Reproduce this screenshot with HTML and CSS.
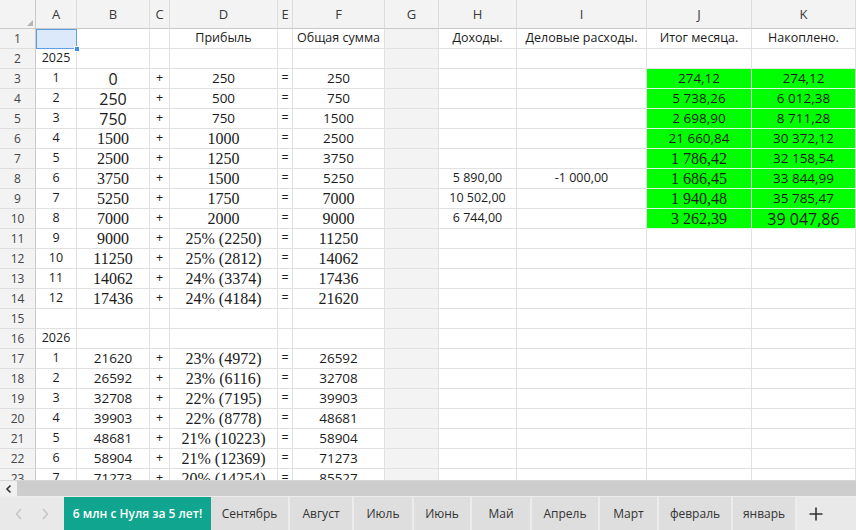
FILE: index.html
```html
<!DOCTYPE html>
<html lang="ru">
<head>
<meta charset="utf-8">
<title>Таблица</title>
<link rel="stylesheet" href="styles.css">
</head>
<body>
<div class="app">
  <div class="sheet">
    <div class="ch corner"><span class="tri"></span></div>
    <div class="ch">A</div><div class="ch">B</div><div class="ch">C</div><div class="ch">D</div><div class="ch">E</div><div class="ch">F</div><div class="ch">G</div><div class="ch">H</div><div class="ch">I</div><div class="ch">J</div><div class="ch">K</div>

    <div class="rh">1</div><div class="c sel"><span class="handle"></span></div><div class="c"></div><div class="c"></div><div class="c t">Прибыль</div><div class="c"></div><div class="c t">Общая сумма</div><div class="c cg"></div><div class="c t">Доходы.</div><div class="c t">Деловые расходы.</div><div class="c t">Итог месяца.</div><div class="c t">Накоплено.</div>

    <div class="rh">2</div><div class="c t">2025</div><div class="c"></div><div class="c"></div><div class="c"></div><div class="c"></div><div class="c"></div><div class="c cg"></div><div class="c"></div><div class="c"></div><div class="c"></div><div class="c"></div>

    <div class="rh">3</div><div class="c t">1</div><div class="c sb">0</div><div class="c t">+</div><div class="c n">250</div><div class="c t">=</div><div class="c n">250</div><div class="c cg"></div><div class="c"></div><div class="c"></div><div class="c g n">274,12</div><div class="c g n">274,12</div>

    <div class="rh">4</div><div class="c t">2</div><div class="c sb">250</div><div class="c t">+</div><div class="c n">500</div><div class="c t">=</div><div class="c n">750</div><div class="c cg"></div><div class="c"></div><div class="c"></div><div class="c g n">5 738,26</div><div class="c g n">6 012,38</div>

    <div class="rh">5</div><div class="c t">3</div><div class="c sb">750</div><div class="c t">+</div><div class="c n">750</div><div class="c t">=</div><div class="c n">1500</div><div class="c cg"></div><div class="c"></div><div class="c"></div><div class="c g n">2 698,90</div><div class="c g n">8 711,28</div>

    <div class="rh">6</div><div class="c t">4</div><div class="c sf">1500</div><div class="c t">+</div><div class="c sf">1000</div><div class="c t">=</div><div class="c n">2500</div><div class="c cg"></div><div class="c"></div><div class="c"></div><div class="c g n">21 660,84</div><div class="c g n">30 372,12</div>

    <div class="rh">7</div><div class="c t">5</div><div class="c sf">2500</div><div class="c t">+</div><div class="c sf">1250</div><div class="c t">=</div><div class="c n">3750</div><div class="c cg"></div><div class="c"></div><div class="c"></div><div class="c g sf">1 786,42</div><div class="c g n">32 158,54</div>

    <div class="rh">8</div><div class="c t">6</div><div class="c sf">3750</div><div class="c t">+</div><div class="c sf">1500</div><div class="c t">=</div><div class="c n">5250</div><div class="c cg"></div><div class="c t">5 890,00</div><div class="c t">-1 000,00</div><div class="c g sf">1 686,45</div><div class="c g n">33 844,99</div>

    <div class="rh">9</div><div class="c t">7</div><div class="c sf">5250</div><div class="c t">+</div><div class="c sf">1750</div><div class="c t">=</div><div class="c sf">7000</div><div class="c cg"></div><div class="c t">10 502,00</div><div class="c"></div><div class="c g sf">1 940,48</div><div class="c g n">35 785,47</div>

    <div class="rh">10</div><div class="c t">8</div><div class="c sf">7000</div><div class="c t">+</div><div class="c sf">2000</div><div class="c t">=</div><div class="c sf">9000</div><div class="c cg"></div><div class="c t">6 744,00</div><div class="c"></div><div class="c g sf">3 262,39</div><div class="c g sb">39 047,86</div>

    <div class="rh">11</div><div class="c t">9</div><div class="c sf">9000</div><div class="c t">+</div><div class="c sf">25% (2250)</div><div class="c t">=</div><div class="c sf">11250</div><div class="c cg"></div><div class="c"></div><div class="c"></div><div class="c"></div><div class="c"></div>

    <div class="rh">12</div><div class="c t">10</div><div class="c sf">11250</div><div class="c t">+</div><div class="c sf">25% (2812)</div><div class="c t">=</div><div class="c sf">14062</div><div class="c cg"></div><div class="c"></div><div class="c"></div><div class="c"></div><div class="c"></div>

    <div class="rh">13</div><div class="c t">11</div><div class="c sf">14062</div><div class="c t">+</div><div class="c sf">24% (3374)</div><div class="c t">=</div><div class="c sf">17436</div><div class="c cg"></div><div class="c"></div><div class="c"></div><div class="c"></div><div class="c"></div>

    <div class="rh">14</div><div class="c t">12</div><div class="c sf">17436</div><div class="c t">+</div><div class="c sf">24% (4184)</div><div class="c t">=</div><div class="c sf">21620</div><div class="c cg"></div><div class="c"></div><div class="c"></div><div class="c"></div><div class="c"></div>

    <div class="rh">15</div><div class="c"></div><div class="c"></div><div class="c"></div><div class="c"></div><div class="c"></div><div class="c"></div><div class="c cg"></div><div class="c"></div><div class="c"></div><div class="c"></div><div class="c"></div>

    <div class="rh">16</div><div class="c t">2026</div><div class="c"></div><div class="c"></div><div class="c"></div><div class="c"></div><div class="c"></div><div class="c cg"></div><div class="c"></div><div class="c"></div><div class="c"></div><div class="c"></div>

    <div class="rh">17</div><div class="c t">1</div><div class="c n">21620</div><div class="c t">+</div><div class="c sf">23% (4972)</div><div class="c t">=</div><div class="c n">26592</div><div class="c cg"></div><div class="c"></div><div class="c"></div><div class="c"></div><div class="c"></div>

    <div class="rh">18</div><div class="c t">2</div><div class="c n">26592</div><div class="c t">+</div><div class="c sf">23% (6116)</div><div class="c t">=</div><div class="c n">32708</div><div class="c cg"></div><div class="c"></div><div class="c"></div><div class="c"></div><div class="c"></div>

    <div class="rh">19</div><div class="c t">3</div><div class="c n">32708</div><div class="c t">+</div><div class="c sf">22% (7195)</div><div class="c t">=</div><div class="c n">39903</div><div class="c cg"></div><div class="c"></div><div class="c"></div><div class="c"></div><div class="c"></div>

    <div class="rh">20</div><div class="c t">4</div><div class="c n">39903</div><div class="c t">+</div><div class="c sf">22% (8778)</div><div class="c t">=</div><div class="c n">48681</div><div class="c cg"></div><div class="c"></div><div class="c"></div><div class="c"></div><div class="c"></div>

    <div class="rh">21</div><div class="c t">5</div><div class="c n">48681</div><div class="c t">+</div><div class="c sf">21% (10223)</div><div class="c t">=</div><div class="c n">58904</div><div class="c cg"></div><div class="c"></div><div class="c"></div><div class="c"></div><div class="c"></div>

    <div class="rh">22</div><div class="c t">6</div><div class="c n">58904</div><div class="c t">+</div><div class="c sf">21% (12369)</div><div class="c t">=</div><div class="c n">71273</div><div class="c cg"></div><div class="c"></div><div class="c"></div><div class="c"></div><div class="c"></div>

    <div class="rh">23</div><div class="c t">7</div><div class="c n">71273</div><div class="c t">+</div><div class="c sf">20% (14254)</div><div class="c t">=</div><div class="c n">85527</div><div class="c cg"></div><div class="c"></div><div class="c"></div><div class="c"></div><div class="c"></div>
  </div>

  <div class="hscroll">
    <div class="sbtn"><svg width="10" height="10" viewBox="0 0 10 10"><path d="M6.5 1.5 L3 5 L6.5 8.5" fill="none" stroke="#333" stroke-width="1.6"/></svg></div>
    <div class="thumb"></div>
  </div>

  <div class="tabs">
    <div class="nav">
      <svg width="10" height="12" viewBox="0 0 10 12"><path d="M7 1 L2.5 6 L7 11" fill="none" stroke="#c4c4c4" stroke-width="1.4"/></svg>
      <svg width="10" height="12" viewBox="0 0 10 12"><path d="M3 1 L7.5 6 L3 11" fill="none" stroke="#c4c4c4" stroke-width="1.4"/></svg>
    </div>
    <div class="tab active">6 млн с Нуля за 5 лет!</div>
    <div class="tab w79">Сентябрь</div>
    <div class="tab w64">Август</div>
    <div class="tab w60">Июль</div>
    <div class="tab w58">Июнь</div>
    <div class="tab w60">Май</div>
    <div class="tab w68">Апрель</div>
    <div class="tab w59">Март</div>
    <div class="tab w74">февраль</div>
    <div class="tab w64">январь</div>
    <div class="add"><svg width="14" height="14" viewBox="0 0 14 14"><path d="M7 0.5 V13.5 M0.5 7 H13.5" stroke="#333" stroke-width="1.6"/></svg></div>
  </div>
</div>
</body>
</html>
```

FILE: styles.css
```css
* { box-sizing: border-box; }
html, body { margin: 0; padding: 0; }
body {
  width: 856px;
  height: 530px;
  overflow: hidden;
  background: #ffffff;
  font-family: "Open Sans", "Noto Sans", sans-serif;
  color: #1b1b1b;
}
.app {
  display: flex;
  flex-direction: column;
  width: 856px;
  height: 530px;
}
.sheet {
  display: grid;
  grid-template-columns: 36px 41px 73px 20px 108px 15px 92px 54px 78px 130px 105px 104px;
  grid-template-rows: 29px;
  grid-auto-rows: 20px;
  height: 480px;
  overflow: hidden;
  flex: none;
}
.ch {
  background: #f3f3f3;
  border-right: 1px solid #dcdcdc;
  border-bottom: 1px solid #c9c9c9;
  display: flex;
  align-items: center;
  justify-content: center;
  font-size: 13px;
  color: #3a3a3a;
}
.corner {
  position: relative;
  border-right: 1px solid #c9c9c9;
}
.tri {
  position: absolute;
  right: 2px;
  bottom: 2px;
  width: 0;
  height: 0;
  border-left: 6px solid transparent;
  border-bottom: 6px solid #b4b4b4;
}
.rh {
  background: #f3f3f3;
  border-right: 1px solid #c9c9c9;
  border-bottom: 1px solid #dedede;
  display: flex;
  align-items: center;
  justify-content: center;
  font-size: 12px;
  color: #444;
}
.c {
  border-right: 1px solid #e1e1e1;
  border-bottom: 1px solid #e1e1e1;
  display: flex;
  align-items: center;
  justify-content: center;
  white-space: nowrap;
  overflow: hidden;
  line-height: 1;
}
.cg { background: #f3f3f3; }
.t { font-size: 12.5px; }
.n { font-size: 13.5px; }
.sb { font-size: 16px; }
.sf {
  font-family: "Liberation Serif", "DejaVu Serif", serif;
  font-size: 16px;
  padding-top: 1px;
}
.g {
  background: #00ff00;
  border-right-color: #dff5df;
  border-bottom-color: #dff5df;
}
.sel {
  position: relative;
  overflow: visible;
  background: #dbe9fb;
  border: 1px solid #5f9ee6;
}
.handle {
  position: absolute;
  right: -4px;
  bottom: -4px;
  width: 6px;
  height: 6px;
  background: #3b8fe8;
  border: 1px solid #ffffff;
  z-index: 2;
}
.hscroll {
  display: flex;
  height: 17px;
  flex: none;
  border-top: 1px solid #d6d6d6;
  border-bottom: 1px solid #ececec;
}
.sbtn {
  width: 17px;
  background: #f0f0f0;
  display: flex;
  align-items: center;
  justify-content: center;
}
.thumb {
  flex: 1;
  background: #cdcdcd;
}
.tabs {
  display: flex;
  flex: 1;
  background: #e9e9e9;
  font-size: 12px;
}
.nav {
  flex: none;
  width: 64px;
  display: flex;
  align-items: center;
  justify-content: space-around;
  padding: 0 6px;
  background: #e9e9e9;
}
.tab {
  flex: none;
  display: flex;
  align-items: center;
  justify-content: center;
  background: #dedede;
  color: #333;
  border-right: 2px solid #ececec;
  white-space: nowrap;
}
.tab.active {
  width: 147px;
  background: #0fa58e;
  color: #ffffff;
  font-weight: 600;
  border-right: none;
}
.w58 { width: 58px; }
.w59 { width: 59px; }
.w60 { width: 60px; }
.w64 { width: 64px; }
.w68 { width: 68px; }
.w74 { width: 74px; }
.w79 { width: 79px; }
.add {
  flex: 1;
  display: flex;
  align-items: center;
  padding-left: 12px;
  background: #e9e9e9;
}
```
